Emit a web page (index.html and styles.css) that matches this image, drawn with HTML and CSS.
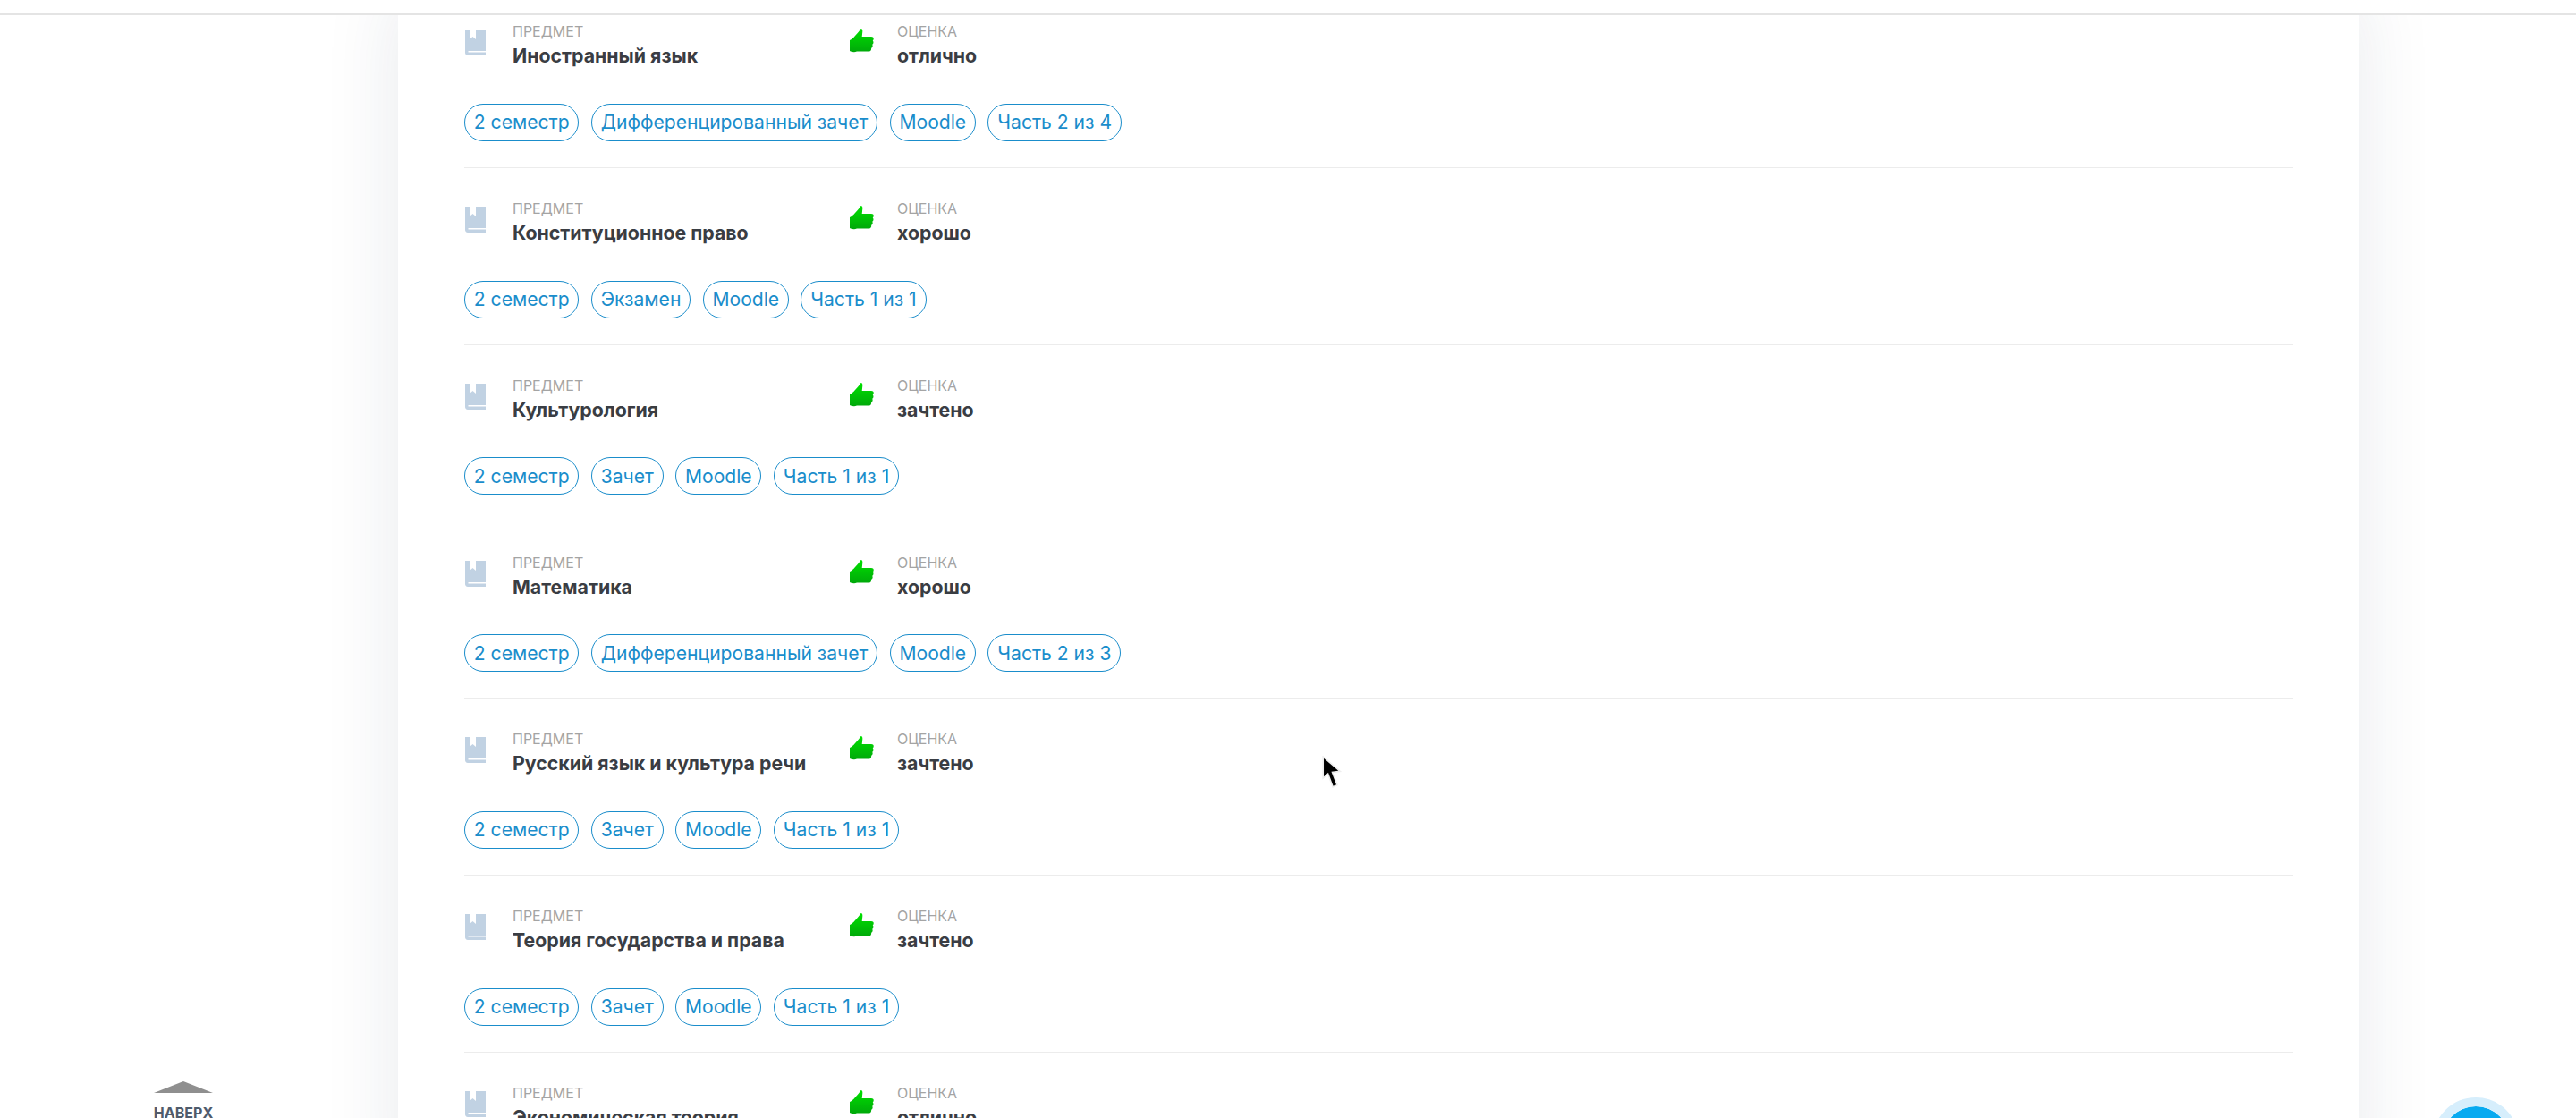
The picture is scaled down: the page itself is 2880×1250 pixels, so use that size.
FILE: index.html
```html
<!DOCTYPE html>
<html lang="ru">
<head>
<meta charset="utf-8">
<title>Оценки</title>
<link rel="stylesheet" href="styles.css">
</head>
<body>
<svg class="defs" width="0" height="0" aria-hidden="true">
  <defs>
    <linearGradient id="thumb-fill" x1="0" y1="0" x2="0" y2="1">
      <stop offset="0" stop-color="#00e000"/>
      <stop offset="1" stop-color="#00a80a"/>
    </linearGradient>
    <symbol id="book" viewBox="0 0 23 29">
      <path fill="#c1d2e3" d="M0 0h5v11l3.500-3 3.500 3V0h11v24H3.500v1.500H23V29H3c-2 0-3-1.500-3-3z"/>
    </symbol>
    <symbol id="thumb" viewBox="0 0 27 27">
      <path fill="url(#thumb-fill)" d="M12.500 0c1.500 0 2 1.500 1.800 3.500L13.700 9H24c2 0 3 1 2.700 2.500 0 1-.7 1.700-1 2 .7.700 1 1.500.7 2.500-.2 1-.8 1.500-1.200 1.800.5.700.6 1.500.3 2.400-.3.900-1 1.400-1.500 1.600.3.700.2 1.500-.2 2.200-.5 1-1.500 1.500-3 1.500H8C5 27 3 26 1 25.500L0 25V13c2-1 4-2.500 6-5 3-3 5-6 6.500-8z"/>
    </symbol>
  </defs>
</svg>

<div class="page">
  <header class="topbar"></header>

  <main class="card">
    <article class="row">
      <div class="head">
        <div class="field">
          <svg class="book"><use href="#book"/></svg>
          <div><div class="label">ПРЕДМЕТ</div><div class="value">Иностранный язык</div></div>
        </div>
        <div class="field">
          <svg class="thumb"><use href="#thumb"/></svg>
          <div><div class="label">ОЦЕНКА</div><div class="value">отлично</div></div>
        </div>
      </div>
      <div class="tags"><span class="tag">2 семестр</span><span class="tag">Дифференцированный зачет</span><span class="tag">Moodle</span><span class="tag">Часть 2 из 4</span></div>
    </article>

    <article class="row">
      <div class="head">
        <div class="field">
          <svg class="book"><use href="#book"/></svg>
          <div><div class="label">ПРЕДМЕТ</div><div class="value">Конституционное право</div></div>
        </div>
        <div class="field">
          <svg class="thumb"><use href="#thumb"/></svg>
          <div><div class="label">ОЦЕНКА</div><div class="value">хорошо</div></div>
        </div>
      </div>
      <div class="tags"><span class="tag">2 семестр</span><span class="tag">Экзамен</span><span class="tag">Moodle</span><span class="tag">Часть 1 из 1</span></div>
    </article>

    <article class="row">
      <div class="head">
        <div class="field">
          <svg class="book"><use href="#book"/></svg>
          <div><div class="label">ПРЕДМЕТ</div><div class="value">Культурология</div></div>
        </div>
        <div class="field">
          <svg class="thumb"><use href="#thumb"/></svg>
          <div><div class="label">ОЦЕНКА</div><div class="value">зачтено</div></div>
        </div>
      </div>
      <div class="tags"><span class="tag">2 семестр</span><span class="tag">Зачет</span><span class="tag">Moodle</span><span class="tag">Часть 1 из 1</span></div>
    </article>

    <article class="row">
      <div class="head">
        <div class="field">
          <svg class="book"><use href="#book"/></svg>
          <div><div class="label">ПРЕДМЕТ</div><div class="value">Математика</div></div>
        </div>
        <div class="field">
          <svg class="thumb"><use href="#thumb"/></svg>
          <div><div class="label">ОЦЕНКА</div><div class="value">хорошо</div></div>
        </div>
      </div>
      <div class="tags"><span class="tag">2 семестр</span><span class="tag">Дифференцированный зачет</span><span class="tag">Moodle</span><span class="tag">Часть 2 из 3</span></div>
    </article>

    <article class="row">
      <div class="head">
        <div class="field">
          <svg class="book"><use href="#book"/></svg>
          <div><div class="label">ПРЕДМЕТ</div><div class="value">Русский язык и культура речи</div></div>
        </div>
        <div class="field">
          <svg class="thumb"><use href="#thumb"/></svg>
          <div><div class="label">ОЦЕНКА</div><div class="value">зачтено</div></div>
        </div>
      </div>
      <div class="tags"><span class="tag">2 семестр</span><span class="tag">Зачет</span><span class="tag">Moodle</span><span class="tag">Часть 1 из 1</span></div>
    </article>

    <article class="row">
      <div class="head">
        <div class="field">
          <svg class="book"><use href="#book"/></svg>
          <div><div class="label">ПРЕДМЕТ</div><div class="value">Теория государства и права</div></div>
        </div>
        <div class="field">
          <svg class="thumb"><use href="#thumb"/></svg>
          <div><div class="label">ОЦЕНКА</div><div class="value">зачтено</div></div>
        </div>
      </div>
      <div class="tags"><span class="tag">2 семестр</span><span class="tag">Зачет</span><span class="tag">Moodle</span><span class="tag">Часть 1 из 1</span></div>
    </article>

    <article class="row">
      <div class="head">
        <div class="field">
          <svg class="book"><use href="#book"/></svg>
          <div><div class="label">ПРЕДМЕТ</div><div class="value">Экономическая теория</div></div>
        </div>
        <div class="field">
          <svg class="thumb"><use href="#thumb"/></svg>
          <div><div class="label">ОЦЕНКА</div><div class="value">отлично</div></div>
        </div>
      </div>
    </article>
  </main>

  <a class="to-top">
    <span class="to-top-arrow"></span>
    <span class="to-top-text">НАВЕРХ</span>
  </a>

  <div class="chat"></div>

  <svg class="cursor" viewBox="0 0 22 34" width="24" height="37" aria-hidden="true">
    <path fill="#000" stroke="#eee" stroke-width="1.500" d="M2 1l0 22 5-4.500 5 13.500 4.500-2-5-13 8-1z"/>
  </svg>
</div>
</body>
</html>
```
FILE: styles.css
```css
* { box-sizing: border-box; }

html, body {
  margin: 0;
  padding: 0;
  background: #fff;
}

body {
  font-family: Inter, "Noto Sans", sans-serif;
  color: #3a3d43;
}

.defs { position: absolute; }

.page {
  position: relative;
  height: 1250px;
  overflow: hidden;
}

.topbar {
  position: absolute;
  z-index: 5;
  top: 0;
  left: 0;
  right: 0;
  height: 17px;
  background: #fff;
  border-bottom: 2px solid #e4e4e4;
}

.card {
  width: 2192px;
  margin: -10px 0 0 445px;
  padding: 0 73px 0 74px;
  background: #fff;
  box-shadow: 0 0 80px rgba(30, 45, 80, .1);
}

.row {
  padding: 35.3px 0 29px;
  border-bottom: 1px solid #ececec;
}

.head {
  display: grid;
  grid-template-columns: 431px 1fr;
  margin-bottom: 38px;
}

.field {
  display: flex;
  align-items: flex-start;
}

.book {
  width: 23px;
  height: 29px;
  margin: 8px 30px 0 1px;
  flex: none;
}

.thumb {
  width: 27px;
  height: 27px;
  margin: 7px 26px 0 0;
  flex: none;
}

.label {
  font-size: 16px;
  line-height: 20px;
  color: #a4a4a4;
  margin-bottom: 2px;
}

.value {
  font-size: 21.300px;
  line-height: 30.500px;
  font-weight: 700;
  color: #3a3d43;
}

.tags {
  display: flex;
  gap: 13.500px;
}

.tag {
  height: 42px;
  padding: 0 9.800px;
  display: flex;
  align-items: center;
  border: 1px solid #1a8dcb;
  border-radius: 21px;
  font-size: 21.100px;
  color: #1a8dcb;
  white-space: nowrap;
}

.to-top {
  position: absolute;
  left: 172px;
  top: 1209px;
  width: 66px;
  display: flex;
  flex-direction: column;
  align-items: center;
}

.to-top-arrow {
  width: 66px;
  height: 13px;
  background: #8f8f8f;
  clip-path: polygon(50% 0, 100% 100%, 0 100%);
}

.to-top-text {
  margin-top: 12px;
  font-size: 16px;
  line-height: 20px;
  font-weight: 700;
  color: #4f5b6b;
}

.chat {
  position: absolute;
  left: 2720px;
  top: 1227px;
  width: 96px;
  height: 96px;
  border-radius: 50%;
  background: #08aaf0;
  border: 10px solid #d6eefc;
  background-clip: padding-box;
}

.cursor {
  position: absolute;
  left: 1477px;
  top: 845px;
}
```
